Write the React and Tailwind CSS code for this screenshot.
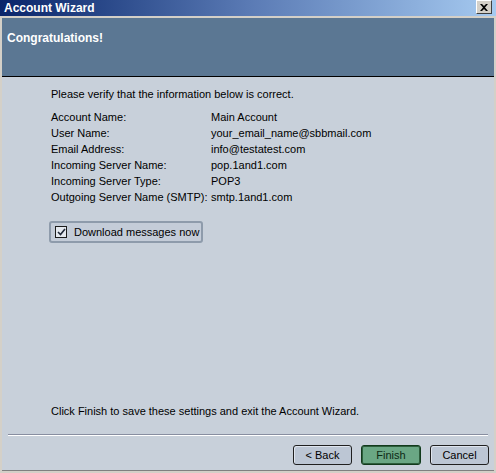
import React from "react";

const labels = [
  "Account Name:",
  "User Name:",
  "Email Address:",
  "Incoming Server Name:",
  "Incoming Server Type:",
  "Outgoing Server Name (SMTP):",
];
const values = [
  "Main Account",
  "your_email_name@sbbmail.com",
  "info@testatest.com",
  "pop.1and1.com",
  "POP3",
  "smtp.1and1.com",
];

export default function App() {
  return (
    <div
      className="w-[496px] h-[473px] bg-[#d4d0c8] flex flex-col overflow-hidden text-[11px] text-black"
      style={{ fontFamily: '"Liberation Sans", Arial, sans-serif' }}
    >
      {/* Title bar */}
      <div className="h-[16px] flex items-center justify-between bg-gradient-to-r from-[#0a246a] via-[#5a7ab4] to-[#a6caf0] pl-[4px] pr-[4px]">
        <span className="text-white font-bold text-[12px] leading-none">
          Account Wizard
        </span>
        <div className="w-[16px] h-[14px] bg-[#d4d0c8] border border-t-white border-l-white border-r-[#404040] border-b-[#404040] flex items-center justify-center -mt-[2px]">
          <svg width="8" height="7" viewBox="0 0 8 7">
            <path d="M0 0 L2 0 L4 2 L6 0 L8 0 L5 3.5 L8 7 L6 7 L4 5 L2 7 L0 7 L3 3.5 Z" fill="black" />
          </svg>
        </div>
      </div>
      <div className="h-[2px] bg-[#d4d0c8]" />
      {/* Content frame */}
      <div className="flex-1 flex flex-col px-[2px] pb-[2px]">
        <div className="h-[59px] bg-[#5b7793] border-b border-black pl-[5px] pt-[11px]">
          <span className="text-white font-bold text-[12px]">Congratulations!</span>
        </div>
        <div className="flex-1 bg-[#c8d0da] flex flex-col">
          <div className="pl-[49px] pt-[9px] flex flex-col items-start">
            <div className="h-[16px] leading-[16px]">Please verify that the information below is correct.</div>
            <div className="mt-[7px] flex leading-[16px]">
              <div className="w-[160px] shrink-0 flex flex-col">
                {labels.map((k) => (
                  <div key={k} className="h-[16px] whitespace-nowrap">{k}</div>
                ))}
              </div>
              <div className="flex flex-col">
                {values.map((v) => (
                  <div key={v} className="h-[16px] whitespace-nowrap">{v}</div>
                ))}
              </div>
            </div>
            <div className="mt-[16px] w-[154px] h-[22px] -ml-[2px] rounded-[3px] border-2 border-[#8e9bab] bg-[#c4ccd8] flex items-center pl-[4px]">
              <div className="w-[12px] h-[12px] border border-[#1c1c1c] bg-[#e4e8ee] flex items-center justify-center">
                <svg width="9" height="8" viewBox="0 0 9 8">
                  <path d="M1 4 L3.5 6.5 L8 1" stroke="#202838" strokeWidth="1.6" fill="none" />
                </svg>
              </div>
              <span className="ml-[7px]">Download messages now</span>
            </div>
          </div>
          <div className="flex-1" />
          <div className="pl-[49px] h-[16px] leading-[16px]">
            Click Finish to save these settings and exit the Account Wizard.
          </div>
          <div className="mx-[6px] mt-[15px] border-t border-[#888ea0] border-b border-b-white" />
          <div className="flex justify-end gap-[9px] pr-[5px] pt-[9px] pb-[5px]">
            <button className="w-[59px] h-[20px] rounded-[3px] border border-[#202020] bg-[#bcc6d4] shadow-[inset_1px_1px_0_#dfe5ee]">
              &lt; Back
            </button>
            <button className="w-[60px] h-[20px] rounded-[3px] border border-[#123a1c] bg-[#6aa784] text-[#0c2a14] shadow-[inset_0_0_0_1px_#2d5e3c]">
              Finish
            </button>
            <button className="w-[59px] h-[20px] rounded-[3px] border border-[#202020] bg-[#bcc6d4] shadow-[inset_1px_1px_0_#dfe5ee]">
              Cancel
            </button>
          </div>
        </div>
        <div className="h-[1px] bg-[#808080]" />
      </div>
    </div>
  );
}
